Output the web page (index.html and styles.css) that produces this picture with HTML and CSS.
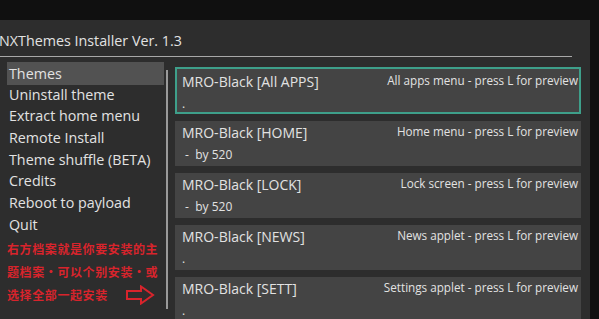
FILE: index.html
```html
<!DOCTYPE html>
<html>
    <head>
        <meta charset="utf-8">
        <title>NXThemes Installer</title>
        <link rel="stylesheet" href="styles.css">
    </head>
    <body>
        <div class="topStrip"></div>
        <div class="panel">
            <div class="appTitle">NXThemes Installer Ver. 1.3</div>
            <div class="titleRule"></div>
            <div class="mainArea">
                <div class="sidebar">
                    <div class="menuItem selected">Themes</div>
                    <div class="menuItem">Uninstall theme</div>
                    <div class="menuItem">Extract home menu</div>
                    <div class="menuItem">Remote Install</div>
                    <div class="menuItem">Theme shuffle (BETA)</div>
                    <div class="menuItem">Credits</div>
                    <div class="menuItem">Reboot to payload</div>
                    <div class="menuItem">Quit</div>
                    <div class="note">
                        <div>右方档案就是你要安装的主</div>
                        <div>题档案·可以个别安装·或</div>
                        <div class="noteLast">选择全部一起安装
                            <svg class="arrow" width="30" height="20" viewBox="0 0 30 20">
                                <polygon points="2,6 16,6 16,1.5 28,10 16,18.5 16,14 2,14" fill="none" stroke="#d8242c" stroke-width="2"/>
                            </svg>
                        </div>
                    </div>
                </div>
                <div class="scrollTrack"></div>
                <div class="themeList">
                    <div class="themeCard active">
                        <div class="themeName">MRO-Black [All APPS]</div>
                        <div class="themeTarget">All apps menu - press L for preview</div>
                        <div class="themeAuthor">.</div>
                    </div>
                    <div class="themeCard">
                        <div class="themeName">MRO-Black [HOME]</div>
                        <div class="themeTarget">Home menu - press L for preview</div>
                        <div class="themeAuthor">&nbsp;-&nbsp; by 520</div>
                    </div>
                    <div class="themeCard">
                        <div class="themeName">MRO-Black [LOCK]</div>
                        <div class="themeTarget">Lock screen - press L for preview</div>
                        <div class="themeAuthor">&nbsp;-&nbsp; by 520</div>
                    </div>
                    <div class="themeCard">
                        <div class="themeName">MRO-Black [NEWS]</div>
                        <div class="themeTarget">News applet - press L for preview</div>
                        <div class="themeAuthor">.</div>
                    </div>
                    <div class="themeCard">
                        <div class="themeName">MRO-Black [SETT]</div>
                        <div class="themeTarget">Settings applet - press L for preview</div>
                        <div class="themeAuthor">.</div>
                    </div>
                </div>
            </div>
        </div>
    </body>
</html>
```

FILE: styles.css
```css
body
{
    margin: 0;
    padding: 0;
    background-color: #101010;
    font-family: "Open Sans", "Noto Sans", sans-serif;
    color: #e2e2e2;
    overflow: hidden;
}
.topStrip
{
    height: 20px;
}
.panel
{
    width: 590px;
    height: 299px;
    background-color: #2d2d2d;
    overflow: hidden;
}
.appTitle
{
    font-size: 14.3px;
    line-height: 20px;
    padding-top: 11px;
    margin-left: -1px;
    white-space: nowrap;
}
.titleRule
{
    width: 572px;
    height: 1px;
    margin-top: 5px;
    background-color: #a8a8a8;
}
.mainArea
{
    display: flex;
    margin-top: 4px;
}
.sidebar
{
    width: 157px;
    margin-left: 7px;
    padding-top: 1px;
}
.menuItem
{
    font-size: 14.3px;
    height: 21.7px;
    line-height: 21.7px;
    padding-left: 2px;
    white-space: nowrap;
}
.selected
{
    background-color: #525252;
    height: 23px;
    line-height: 23px;
    margin-bottom: -1.3px;
}
.note
{
    margin-top: 1px;
    color: #d8242c;
    font-family: "Noto Sans CJK SC", sans-serif;
    font-weight: bold;
    font-size: 12px;
    line-height: 23px;
    letter-spacing: 0.6px;
    white-space: nowrap;
}
.noteLast
{
    display: flex;
    align-items: center;
}
.arrow
{
    margin-left: 17px;
    margin-top: 2px;
}
.scrollTrack
{
    width: 2px;
    height: 239px;
    margin-top: 9px;
    margin-left: 2px;
    background-color: #9a9a9a;
}
.themeList
{
    margin-left: 7px;
    margin-top: 6px;
    width: 406px;
    display: flex;
    flex-direction: column;
    gap: 7px;
}
.themeCard
{
    box-sizing: border-box;
    height: 45px;
    background-color: #444444;
    padding: 1px 3px 0 7px;
    display: grid;
    grid-template-columns: auto 1fr;
    grid-template-rows: 23px 20px;
}
.active
{
    height: 47px;
    border: 2px solid #3e9f8a;
    padding: 2px 1px 0 5px;
}
.themeName
{
    font-size: 14px;
    line-height: 22px;
    white-space: nowrap;
}
.themeTarget
{
    font-size: 11.7px;
    line-height: 18px;
    text-align: right;
    white-space: nowrap;
}
.themeAuthor
{
    grid-column: 1 / 3;
    font-size: 12px;
    line-height: 20px;
}
```
